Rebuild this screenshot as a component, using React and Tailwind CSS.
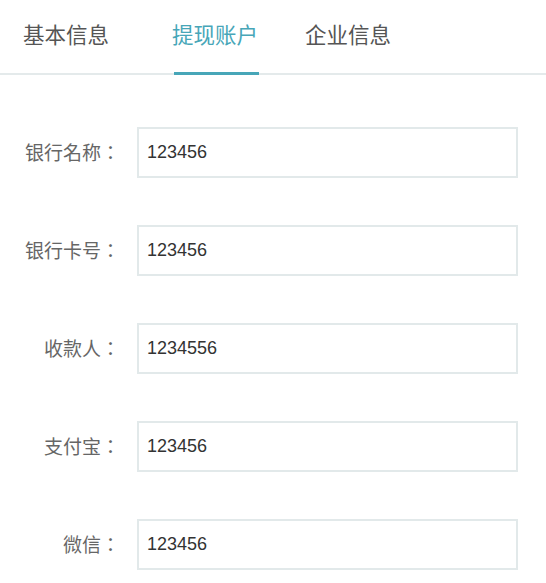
import { useState } from 'react';

const TABS = ['基本信息', '提现账户', '企业信息'];

const FIELDS = [
  { label: '银行名称：', value: '123456' },
  { label: '银行卡号：', value: '123456' },
  { label: '收款人：', value: '1234556' },
  { label: '支付宝：', value: '123456' },
  { label: '微信：', value: '123456' },
];

const FONT = "font-['Helvetica','Liberation_Sans','Noto_Sans_CJK_SC',sans-serif]";

export default function App() {
  const [active, setActive] = useState(1);

  return (
    <div className={`w-[546px] h-[583px] overflow-hidden bg-white ${FONT}`}>
      <div className="flex h-[75px] border-b-2 border-[#e4eaeb] pl-[23px]">
        {TABS.map((tab, i) => (
          <button
            key={tab}
            onClick={() => setActive(i)}
            className={`relative flex items-center h-[73px] pt-[1px] text-[21.5px] leading-none ${
              i === 0 ? '' : i === 1 ? 'ml-[63px]' : 'ml-[47px]'
            } ${active === i ? 'text-[#47a6b8]' : 'text-[#555]'}`}
          >
            {tab}
            {active === i && (
              <span className="absolute left-[2px] right-[-1px] bottom-[-2px] h-[3px] bg-[#47a6b8]" />
            )}
          </button>
        ))}
      </div>

      <div className="flex flex-col gap-[47px] pt-[52px]">
        {FIELDS.map((f) => (
          <div key={f.label} className="flex items-center">
            <label className="w-[120px] text-right text-[19px] text-[#666] font-['Noto_Sans_CJK_TC',sans-serif]">
              {f.label}
            </label>
            <input
              defaultValue={f.value}
              className="ml-[17px] w-[381px] h-[51px] px-[8px] border-2 border-[#e2e9ea] text-[18px] text-[#333] outline-none"
            />
          </div>
        ))}
      </div>
    </div>
  );
}
